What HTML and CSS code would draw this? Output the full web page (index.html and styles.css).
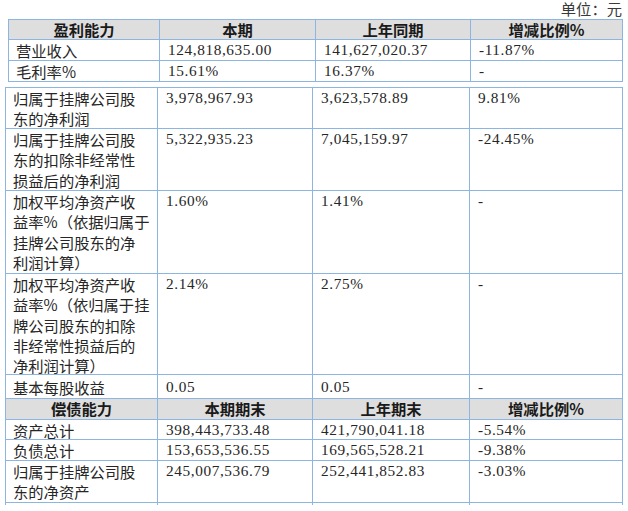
FILE: index.html
```html
<!DOCTYPE html>
<html lang="zh">
<head>
<meta charset="utf-8">
<title>主要财务数据</title>
<link rel="stylesheet" href="styles.css">
</head>
<body>
<div class="page">
  <div class="unit">单位：元</div>

  <div class="tbl t1">
    <div class="cell head">盈利能力</div>
    <div class="cell head">本期</div>
    <div class="cell head">上年同期</div>
    <div class="cell head">增减比例%</div>

    <div class="cell label">营业收入</div>
    <div class="cell num">124,818,635.00</div>
    <div class="cell num">141,627,020.37</div>
    <div class="cell num">-11.87%</div>

    <div class="cell label">毛利率%</div>
    <div class="cell num">15.61%</div>
    <div class="cell num">16.37%</div>
    <div class="cell num">-</div>
  </div>

  <div class="tbl t2">
    <div class="cell label">归属于挂牌公司股<br>东的净利润</div>
    <div class="cell num">3,978,967.93</div>
    <div class="cell num">3,623,578.89</div>
    <div class="cell num">9.81%</div>

    <div class="cell label">归属于挂牌公司股<br>东的扣除非经常性<br>损益后的净利润</div>
    <div class="cell num">5,322,935.23</div>
    <div class="cell num">7,045,159.97</div>
    <div class="cell num">-24.45%</div>

    <div class="cell label">加权平均净资产收<br>益率%（依据归属于<br>挂牌公司股东的净<br>利润计算）</div>
    <div class="cell num">1.60%</div>
    <div class="cell num">1.41%</div>
    <div class="cell num">-</div>

    <div class="cell label">加权平均净资产收<br>益率%（依归属于挂<br>牌公司股东的扣除<br>非经常性损益后的<br>净利润计算）</div>
    <div class="cell num">2.14%</div>
    <div class="cell num">2.75%</div>
    <div class="cell num">-</div>

    <div class="cell label pad">基本每股收益</div>
    <div class="cell num pad">0.05</div>
    <div class="cell num pad">0.05</div>
    <div class="cell num pad">-</div>

    <div class="cell head">偿债能力</div>
    <div class="cell head">本期期末</div>
    <div class="cell head">上年期末</div>
    <div class="cell head">增减比例%</div>

    <div class="cell label">资产总计</div>
    <div class="cell num">398,443,733.48</div>
    <div class="cell num">421,790,041.18</div>
    <div class="cell num">-5.54%</div>

    <div class="cell label">负债总计</div>
    <div class="cell num">153,653,536.55</div>
    <div class="cell num">169,565,528.21</div>
    <div class="cell num">-9.38%</div>

    <div class="cell label">归属于挂牌公司股<br>东的净资产</div>
    <div class="cell num">245,007,536.79</div>
    <div class="cell num">252,441,852.83</div>
    <div class="cell num">-3.03%</div>

    <div class="cell stub"></div>
    <div class="cell stub"></div>
    <div class="cell stub"></div>
    <div class="cell stub"></div>
  </div>
</div>
</body>
</html>
```

FILE: styles.css
```css
html, body {
  margin: 0;
  padding: 0;
  background: #ffffff;
}

.page {
  width: 628px;
  font-family: "Noto Sans CJK SC", "Liberation Serif", sans-serif;
  font-size: 15.3px;
  color: #262626;
}

.unit {
  height: 19px;
  line-height: 17px;
  text-align: right;
  padding-right: 6px;
  color: #3a3a3a;
}

.tbl {
  display: grid;
  gap: 1px;
  padding: 1px;
  background: #8db5e2;
}

.t1 {
  margin-left: 8px;
  width: 613px;
  grid-template-columns: 150px 155px 154px 151px;
  grid-template-rows: 19px 20px 20px;
}

.t2 {
  margin-top: 5px;
  margin-left: 5px;
  width: 616px;
  padding-bottom: 0;
  grid-template-columns: 151px 154px 156px 152px;
  grid-template-rows: 40px 61px 82px 100px 23px 20px 19px 20px 41px 2px;
}

.cell {
  background: #ffffff;
  padding: 0 4px 0 8px;
  line-height: 20.3px;
  white-space: nowrap;
}

.cell.label {
  padding-left: 7px;
}

.cell.head {
  background: #dedede;
  font-weight: 700;
  text-align: center;
  line-height: 19px;
  padding: 0;
  color: #1a1a1a;
}

.cell.num {
  font-family: "Liberation Serif", serif;
  font-size: 15.3px;
  letter-spacing: 0.6px;
}

.cell.pad {
  padding-top: 2px;
}

.cell.stub {
  padding: 0;
}
```
